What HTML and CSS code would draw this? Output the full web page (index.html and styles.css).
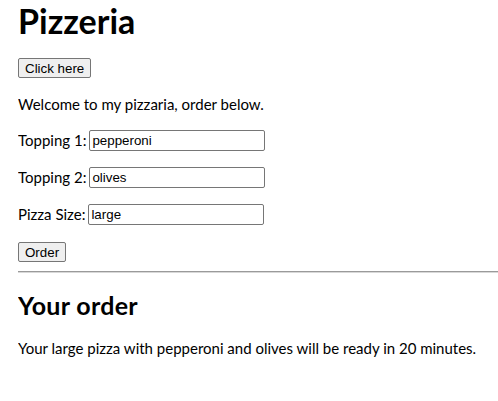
FILE: index.html
```html
<!DOCTYPE html>
<html lang="en">
<head>
<meta charset="utf-8">
<title>Pizzeria</title>
<link rel="stylesheet" href="styles.css">
</head>
<body>
<h1 class="title">Pizzeria</h1>
<div class="btn-row"><button class="btn">Click here</button></div>
<p class="intro">Welcome to my pizzaria, order below.</p>
<div class="field"><label class="label" for="t1">Topping 1:</label><input class="input" id="t1" type="text" value="pepperoni"></div>
<div class="field"><label class="label" for="t2">Topping 2:</label><input class="input" id="t2" type="text" value="olives"></div>
<div class="field"><label class="label" for="sz">Pizza Size:</label><input class="input" id="sz" type="text" value="large"></div>
<div class="order-row"><button class="btn">Order</button></div>
<hr class="rule">
<h2 class="subtitle">Your order</h2>
<p class="summary">Your large pizza with pepperoni and olives will be ready in 20 minutes.</p>
</body>
</html>
```
FILE: styles.css
```css
html, body {
  background: #fff;
}
body {
  margin: 0 0 0 18px;
  font-family: Lato, "Open Sans", sans-serif;
  font-size: 15px;
  color: #000;
}
.title {
  margin: 0 0 17px;
  font-size: 34px;
  line-height: 41px;
  font-weight: 700;
}
.btn-row {
  height: 20px;
  display: flex;
}
.btn {
  height: 20px;
  box-sizing: border-box;
  padding: 0 6px;
  font-family: "Liberation Sans", Arial, sans-serif;
  font-size: 13.33px;
  color: #000;
  background: #efefef;
  border: 1px solid #767676;
  border-radius: 2px;
}
.intro {
  margin: 16px 0 0;
  line-height: 20px;
}
.field {
  display: flex;
  align-items: center;
  gap: 3px;
  height: 21px;
  margin-top: 16px;
}
.label {
  line-height: 21px;
}
.input {
  width: 176px;
  height: 21px;
  box-sizing: border-box;
  margin: 0;
  padding: 1px 2px;
  font-family: "Liberation Sans", Arial, sans-serif;
  font-size: 13.33px;
  color: #000;
  border: 1px solid #767676;
  border-radius: 2px;
  background: #fff;
}
.order-row {
  display: flex;
  margin-top: 17px;
}
.rule {
  margin: 9px 0 0;
  height: 0;
  border: 0;
  border-top: 1px solid #9a9a9a;
  border-bottom: 1px solid #d8d8d8;
}
.subtitle {
  margin: 18px 0 0;
  font-size: 25px;
  line-height: 28px;
  font-weight: 700;
  letter-spacing: 0.3px;
}
.summary {
  margin: 19px 0 0;
  line-height: 20px;
}
```
